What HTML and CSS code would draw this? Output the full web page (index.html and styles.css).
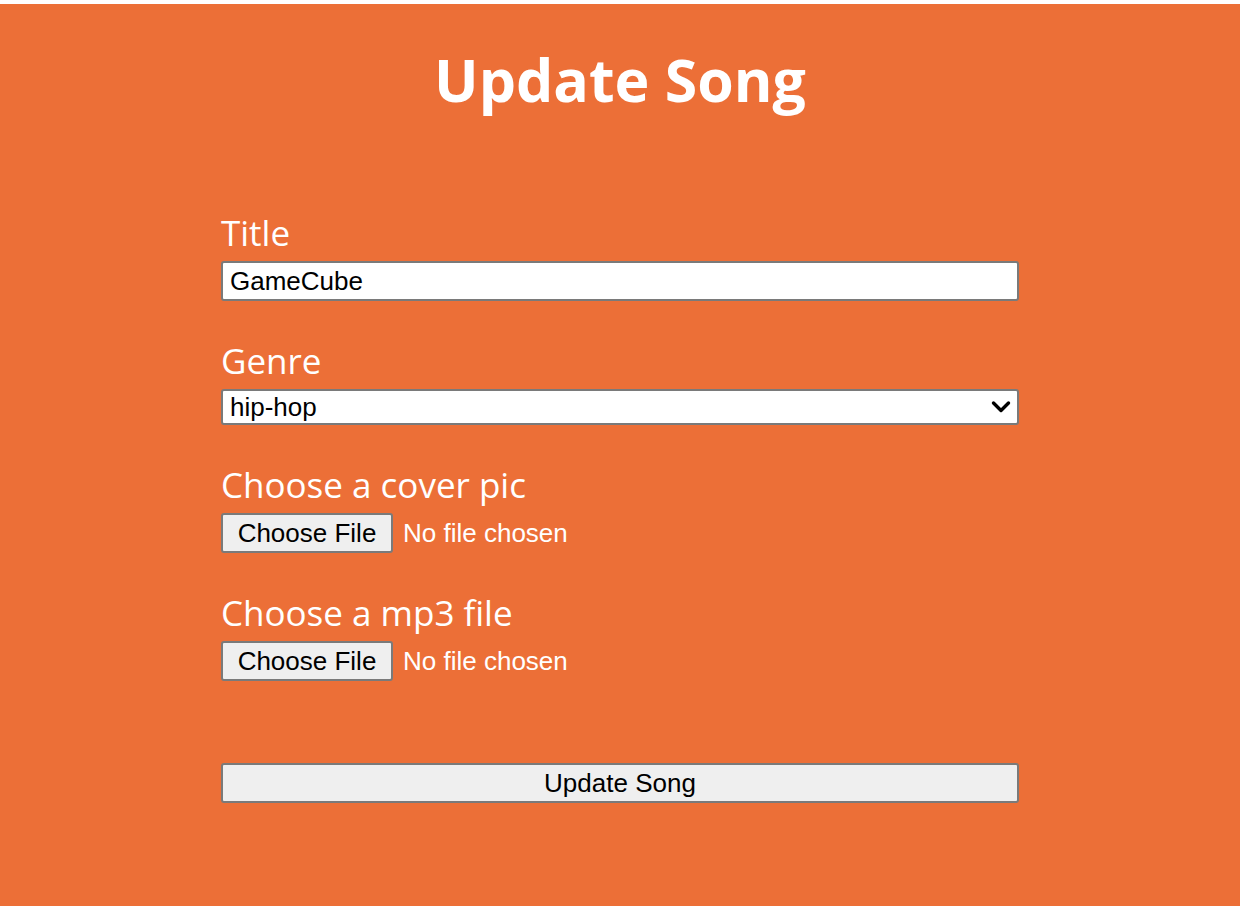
FILE: index.html
```html
<!DOCTYPE html>
<html lang="en">
<head>
<meta charset="utf-8">
<title>Update Song</title>
<link rel="stylesheet" href="styles.css">
</head>
<body>
<main class="page">
  <h1 class="heading">Update Song</h1>
  <form class="song-form">
    <div class="field">
      <label class="label" for="title">Title</label>
      <input class="text-input" id="title" type="text" value="GameCube">
    </div>
    <div class="field">
      <label class="label" for="genre">Genre</label>
      <div class="select-wrap">
        <select class="select" id="genre">
          <option>hip-hop</option>
          <option>rock</option>
          <option>pop</option>
        </select>
        <svg class="chevron" width="20" height="14" viewBox="0 0 20 14" aria-hidden="true"><path d="M2.5 3 L10 10.5 L17.5 3" fill="none" stroke="#000" stroke-width="3.4" stroke-linecap="round" stroke-linejoin="round"/></svg>
      </div>
    </div>
    <div class="field">
      <label class="label" for="cover">Choose a cover pic</label>
      <div class="file-row">
        <button type="button" class="file-btn" id="cover">Choose File</button>
        <span class="file-name">No file chosen</span>
      </div>
    </div>
    <div class="field">
      <label class="label" for="mp3">Choose a mp3 file</label>
      <div class="file-row">
        <button type="button" class="file-btn" id="mp3">Choose File</button>
        <span class="file-name">No file chosen</span>
      </div>
    </div>
    <button type="submit" class="submit-btn">Update Song</button>
  </form>
</main>
</body>
</html>
```
FILE: styles.css
```css
html, body {
  margin: 0;
  padding: 0;
  background: #ffffff;
}
.page {
  margin: 4px 6px 0 0;
  min-height: 902px;
  background: #ec6f37;
  padding-top: 35px;
  box-sizing: border-box;
}
.heading {
  margin: 0;
  text-align: center;
  color: #ffffff;
  font-family: "Open Sans", sans-serif;
  font-weight: 700;
  font-size: 59px;
  line-height: 80px;
}
.song-form {
  width: 798px;
  margin: 94px auto 0;
  display: flex;
  flex-direction: column;
  gap: 40px;
}
.field {
  display: flex;
  flex-direction: column;
  gap: 8px;
}
.label {
  color: #ffffff;
  font-family: "Open Sans", sans-serif;
  font-weight: 500;
  font-size: 35px;
  line-height: 40px;
}
.text-input {
  box-sizing: border-box;
  height: 40px;
  width: 100%;
  margin: 0;
  padding: 0 7px;
  border: 2px solid #7a7a7a;
  border-radius: 3px;
  background: #ffffff;
  font-family: "Liberation Sans", Arial, sans-serif;
  font-size: 26px;
  color: #000;
}
.select-wrap {
  position: relative;
  display: flex;
}
.select {
  appearance: none;
  -webkit-appearance: none;
  box-sizing: border-box;
  height: 36px;
  width: 100%;
  margin: 0;
  padding: 0 40px 0 7px;
  border: 2px solid #7a7a7a;
  border-radius: 3px;
  background: #ffffff;
  font-family: "Liberation Sans", Arial, sans-serif;
  font-size: 26px;
  color: #000;
}
.chevron {
  position: absolute;
  right: 8px;
  top: 11px;
  pointer-events: none;
}
.file-row {
  display: flex;
  align-items: center;
  gap: 10px;
  height: 40px;
}
.file-btn {
  box-sizing: border-box;
  height: 40px;
  width: 172px;
  margin: 0;
  padding: 0;
  border: 2px solid #7a7a7a;
  border-radius: 3px;
  background: #efefef;
  font-family: "Liberation Sans", Arial, sans-serif;
  font-size: 26px;
  color: #000;
}
.file-name {
  color: #ffffff;
  font-family: "Liberation Sans", Arial, sans-serif;
  font-size: 26px;
}
.submit-btn {
  box-sizing: border-box;
  margin-top: 42px;
  height: 40px;
  width: 100%;
  border: 2px solid #7a7a7a;
  border-radius: 3px;
  background: #efefef;
  font-family: "Liberation Sans", Arial, sans-serif;
  font-size: 26px;
  color: #000;
}
```
